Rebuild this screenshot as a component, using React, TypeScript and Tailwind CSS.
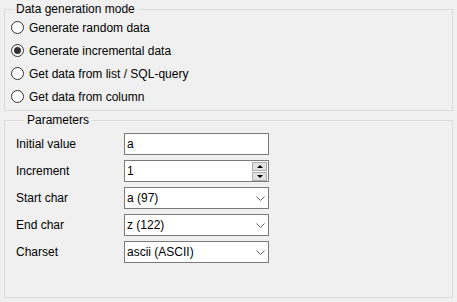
import React from "react";

const modes = [
  "Generate random data",
  "Generate incremental data",
  "Get data from list / SQL-query",
  "Get data from column",
];

const Radio = ({ label, checked }: { label: string; checked?: boolean }) => (
  <div className="h-[23px] flex items-center pl-[6px] gap-[5px]">
    <span className="w-[13px] h-[13px] rounded-full border border-[#333] bg-white flex items-center justify-center">
      {checked && <span className="w-[7px] h-[7px] rounded-full bg-[#333]" />}
    </span>
    <span>{label}</span>
  </div>
);

const TextBox = ({ value }: { value: string }) => (
  <div className="w-[145px] h-[22px] border border-[#7a7a7a] bg-white flex items-center pl-[2px]">
    {value}
  </div>
);

const SpinBox = ({ value }: { value: string }) => (
  <div className="w-[145px] h-[22px] border border-[#7a7a7a] bg-white flex items-center pl-[2px] pr-[1px]">
    <span className="flex-1">{value}</span>
    <div className="flex flex-col gap-[1px]">
      <div className="w-[15px] h-[9px] bg-[#e1e1e1] border border-[#adadad] flex items-center justify-center">
        <span className="w-0 h-0 border-l-[3px] border-r-[3px] border-b-[3px] border-l-transparent border-r-transparent border-b-black" />
      </div>
      <div className="w-[15px] h-[9px] bg-[#e1e1e1] border border-[#adadad] flex items-center justify-center">
        <span className="w-0 h-0 border-l-[3px] border-r-[3px] border-t-[3px] border-l-transparent border-r-transparent border-t-black" />
      </div>
    </div>
  </div>
);

// small windows-style combo arrow
const Chevron = () => (
  <svg width="9" height="5" viewBox="0 0 9 5" className="shrink-0">
    <polyline points="0.5,0.5 4.5,4.5 8.5,0.5" fill="none" stroke="#606060" strokeWidth="1" />
  </svg>
);

const Combo = ({ value }: { value: string }) => (
  <div className="w-[145px] h-[22px] border border-[#7a7a7a] bg-white flex items-center pl-[2px] pr-[3px]">
    <span className="flex-1">{value}</span>
    <Chevron />
  </div>
);

const Row = ({ label, children }: { label: string; children: React.ReactNode }) => (
  <div className="flex items-center h-[22px]">
    <span className="w-[108px]">{label}</span>
    {children}
  </div>
);

export default function App() {
  return (
    <div
      className="w-[457px] h-[302px] bg-[#f0f0f0] text-[12px] text-black px-[4px] pt-[2px] flex flex-col"
      style={{ fontFamily: '"Liberation Sans", Arial, sans-serif' }}
    >
      <fieldset className="border border-[#dcdcdc] h-[109px] pb-[2px]">
        <legend className="ml-[8px] px-[3px] leading-[14px]">Data generation mode</legend>
        {modes.map((m, i) => (
          <Radio key={m} label={m} checked={i === 1} />
        ))}
      </fieldset>

      <fieldset className="border border-[#dcdcdc] mt-[2px] h-[185px] pl-[11px] pt-[6px]">
        <legend className="ml-[8px] px-[3px] leading-[14px]">Parameters</legend>
        <div className="flex flex-col gap-[5px]">
          <Row label="Initial value"><TextBox value="a" /></Row>
          <Row label="Increment"><SpinBox value="1" /></Row>
          <Row label="Start char"><Combo value="a (97)" /></Row>
          <Row label="End char"><Combo value="z (122)" /></Row>
          <Row label="Charset"><Combo value="ascii (ASCII)" /></Row>
        </div>
      </fieldset>
    </div>
  );
}
